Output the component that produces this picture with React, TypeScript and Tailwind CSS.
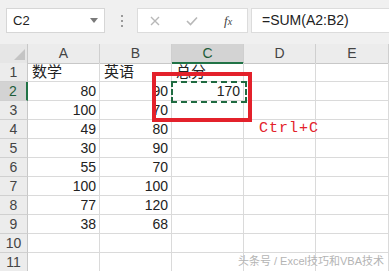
import { useState } from "react"

const cols = ["A", "B", "C", "D", "E"]

const rows: { a: string; b: string; c?: string }[] = [
    { a: "数学", b: "英语", c: "总分" },
    { a: "80", b: "90", c: "170" },
    { a: "100", b: "70" },
    { a: "49", b: "80" },
    { a: "30", b: "90" },
    { a: "55", b: "70" },
    { a: "100", b: "100" },
    { a: "77", b: "120" },
    { a: "38", b: "68" },
    { a: "", b: "" },
    { a: "", b: "" },
]

const isText = (v: string) => /[^\d]/.test(v)

const App = () => {
    const [nameBox] = useState("C2")

    return (
        <div
            className="relative w-[389px] h-[271px] overflow-hidden bg-white text-[#222]"
            style={{ fontFamily: '"Liberation Sans", "Noto Sans CJK SC", sans-serif' }}
        >
            {/* Formula bar */}
            <div className="flex items-center h-[44px] bg-[#f0f0f0] pb-[3px] pl-[6px]">
                <div className="flex items-center justify-between w-[99px] h-[25px] bg-white border border-[#d6d6d6] pl-[6px] pr-[6px]">
                    <span className="text-[13px]">{nameBox}</span>
                    <svg width="8" height="5" viewBox="0 0 8 5">
                        <path d="M0 0 L8 0 L4 5 Z" fill="#7a7a7a" />
                    </svg>
                </div>
                <div className="flex flex-col gap-[3px] ml-[16px]">
                    <span className="w-[2px] h-[2px] bg-[#9a9a9a]" />
                    <span className="w-[2px] h-[2px] bg-[#9a9a9a]" />
                    <span className="w-[2px] h-[2px] bg-[#9a9a9a]" />
                </div>
                <div className="flex items-center h-[25px] w-[111px] ml-[14px] bg-white border border-[#dcdcdc]">
                    <svg className="ml-[12px]" width="10" height="10" viewBox="0 0 10 10">
                        <path d="M1 1 L9 9 M9 1 L1 9" stroke="#b8b8b8" strokeWidth="1.4" />
                    </svg>
                    <svg className="ml-[26px]" width="12" height="10" viewBox="0 0 12 10">
                        <path d="M1 5 L4.5 8.5 L11 1.5" stroke="#b8b8b8" strokeWidth="1.6" fill="none" />
                    </svg>
                    <span className="ml-[26px] text-[13px] italic text-[#444]" style={{ fontFamily: '"Liberation Serif", serif' }}>
                        f<span className="text-[10px]">x</span>
                    </span>
                </div>
                <div className="flex items-center flex-1 h-[25px] ml-[3px] bg-white border-y border-l border-[#dcdcdc] pl-[10px]">
                    <span className="text-[14px]">=SUM(A2:B2)</span>
                </div>
            </div>

            {/* Sheet grid */}
            <div className="grid grid-cols-[28px_72px_72px_72px_72px_1fr] auto-rows-[19px]">
                <div className="h-[20px] bg-[#e6e6e6] border-r border-b border-[#c8c8c8] flex items-end justify-end pr-[2px] pb-[3px]">
                    <svg width="11" height="11" viewBox="0 0 11 11">
                        <path d="M11 0 L11 11 L0 11 Z" fill="#c4c4c4" />
                    </svg>
                </div>
                {cols.map((c) => (
                    <div
                        key={c}
                        className={`h-[20px] flex items-center justify-center text-[14px] border-r border-[#cfcfcf] ${
                            c === "C"
                                ? "bg-[#d3d3d3] text-[#1d5c3a] border-b-2 border-b-[#217346]"
                                : "bg-[#ececec] text-[#444] border-b border-b-[#c8c8c8]"
                        }`}
                    >
                        {c}
                    </div>
                ))}

                {rows.map((r, i) => (
                    <Row key={i} n={i + 1} r={r} />
                ))}
            </div>

            {/* Red highlight box */}
            <div className="absolute left-[152px] top-[72px] w-[100px] h-[50px] border-[4px] border-[#e3212b]" />
            {/* Copy marquee */}
            <div className="absolute left-[171px] top-[81px] w-[76px] h-[22px] border-2 border-dashed border-[#1f6b41]" />

            {/* Watermark */}
            <div className="absolute right-[5px] bottom-[2px] text-[11px] text-[#b4b4b4] whitespace-nowrap">
                头条号 / Excel技巧和VBA技术
            </div>
        </div>
    )
}

const Row = ({ n, r }: { n: number; r: { a: string; b: string; c?: string } }) => {
    const selected = n === 2
    const cell = "h-[19px] border-r border-b border-[#dadada] flex items-center text-[14px] whitespace-nowrap"
    const align = (v: string) => (isText(v) ? "justify-start pl-[4px] text-[15px]" : "justify-end pr-[3px]")

    return (
        <>
            <div
                className={`h-[19px] flex items-center justify-center text-[14px] border-b border-[#d0d0d0] ${
                    selected
                        ? "bg-[#d3d3d3] text-[#1d5c3a] border-r-2 border-r-[#217346]"
                        : "bg-[#ececec] text-[#444] border-r border-r-[#c8c8c8]"
                }`}
            >
                {n}
            </div>
            <div className={`${cell} ${align(r.a)}`}>{r.a}</div>
            <div className={`${cell} ${align(r.b)}`}>{r.b}</div>
            <div className={`${cell} ${align(r.c ?? "")}`}>{r.c}</div>
            <div className={`${cell} overflow-visible pl-[15px]`}>
                {n === 4 && (
                    <span
                        className="text-[15px] text-[#e3212b] tracking-[1px]"
                        style={{ fontFamily: '"Liberation Mono", monospace' }}
                    >
                        Ctrl+C
                    </span>
                )}
            </div>
            <div className={cell} />
        </>
    )
}

export default App
